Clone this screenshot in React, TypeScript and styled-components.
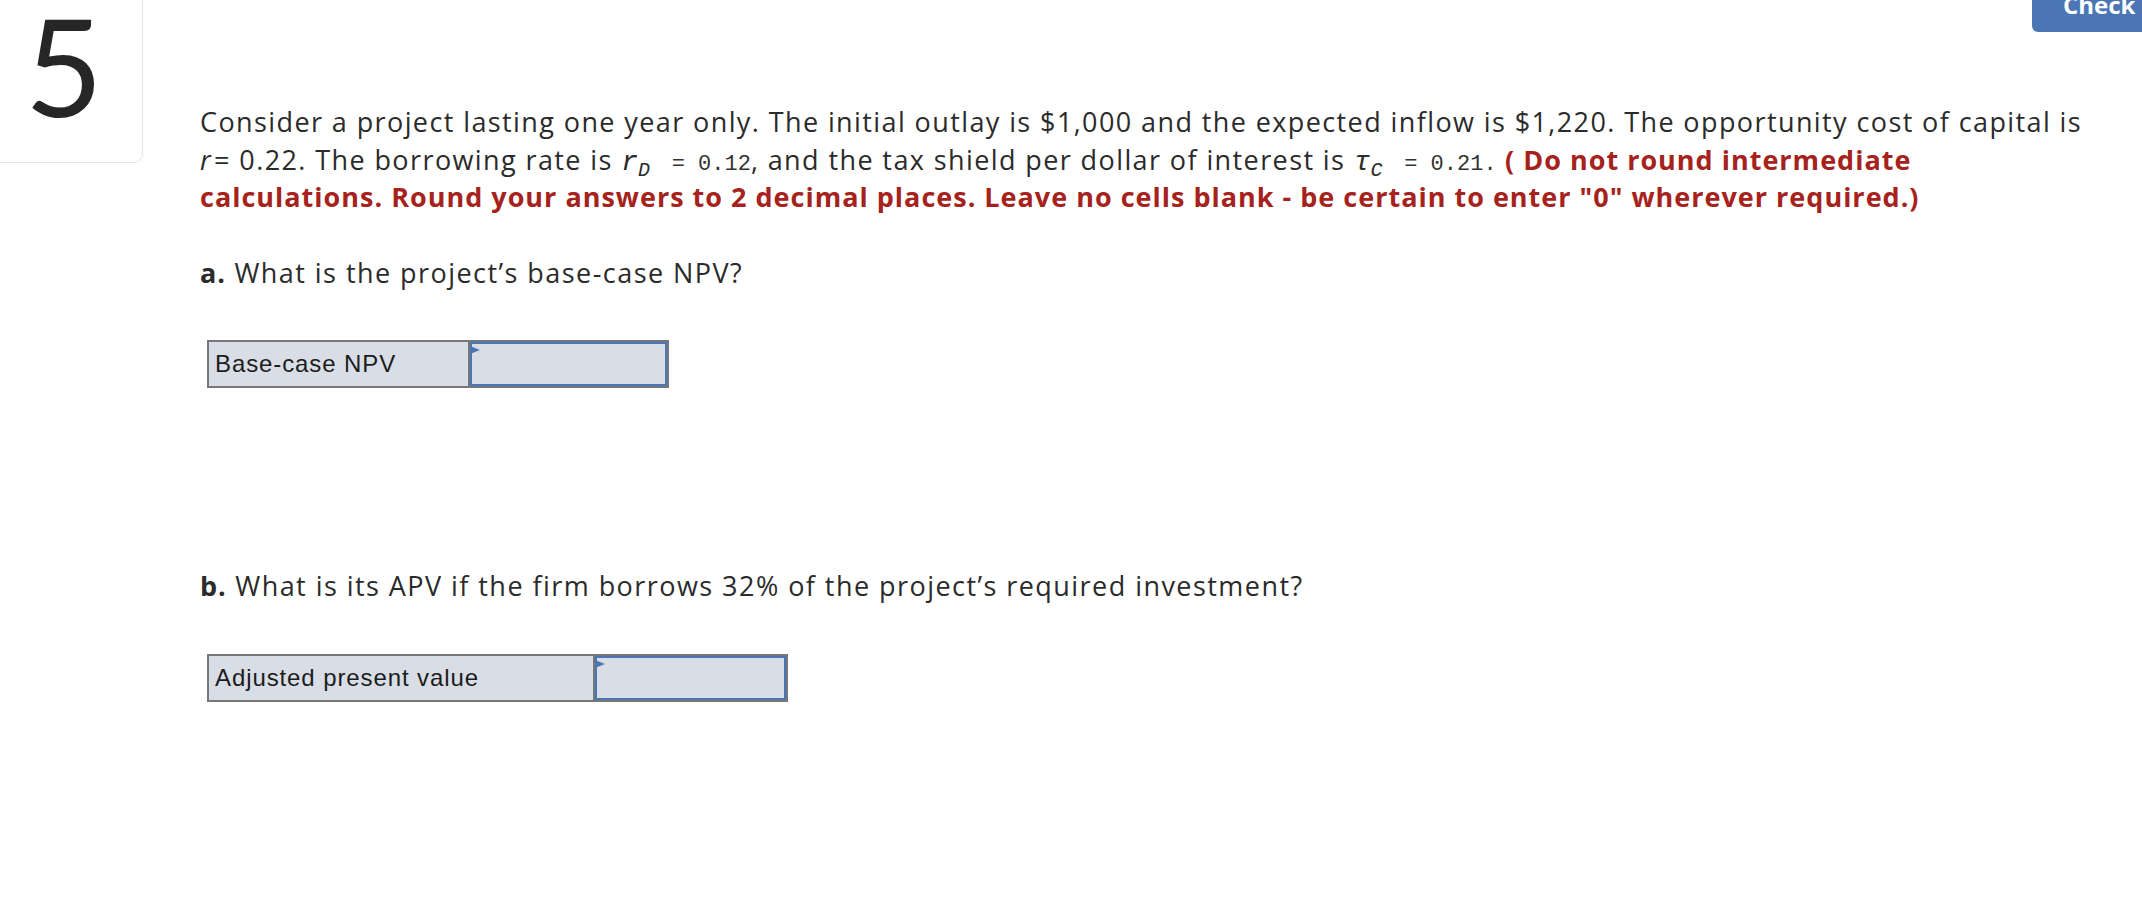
import React from "react";
import styled, { createGlobalStyle } from "styled-components";

const Global = createGlobalStyle`
  html, body {
    margin: 0;
    padding: 0;
    background: #ffffff;
    overflow: hidden;
  }
  body {
    font-family: "Open Sans", "Noto Sans", sans-serif;
    color: #2b2b2b;
  }
`;

const Page = styled.div`
  position: relative;
  display: flex;
  align-items: flex-start;
  width: 2142px;
  height: 910px;
  overflow: hidden;
`;

const NumberCard = styled.div`
  box-sizing: border-box;
  flex: none;
  width: 155px;
  height: 175px;
  margin-top: -12px;
  margin-left: -12px;
  padding-top: 9px;
  padding-right: 3px;
  border: 1px solid #e4e4e4;
  border-radius: 9px;
  background: #ffffff;
  display: flex;
  justify-content: center;
  align-items: flex-start;
`;

const Number = styled.span`
  font-family: "Lato", sans-serif;
  font-weight: 400;
  font-size: 135px;
  line-height: 1;
  color: #262626;
`;

const CheckButton = styled.button`
  position: absolute;
  top: -22px;
  right: -30px;
  width: 140px;
  height: 54px;
  box-sizing: border-box;
  padding: 0 0 0 31px;
  border: none;
  border-radius: 6px;
  background: #4a77b4;
  color: #ffffff;
  font-family: "Open Sans", sans-serif;
  font-weight: 700;
  font-size: 24px;
  text-align: left;
  line-height: 54px;
`;

const Content = styled.main`
  flex: 1;
  margin-left: 57px;
  padding-top: 103px;
`;

const Paragraph = styled.p`
  margin: 0 0 38px 0;
  font-size: 27px;
  line-height: 37.5px;
  letter-spacing: 1.4px;
  white-space: nowrap;
  color: #2b2b2b;
`;

const VarItalic = styled.i`
  font-style: italic;
  margin-right: 2px;
`;

const MathVar = styled.span`
  font-family: "Liberation Mono", monospace;
  font-style: italic;
  font-size: 28px;
  line-height: 1;
  letter-spacing: 0;
`;

const Sub = styled.sub`
  font-family: "Liberation Mono", monospace;
  font-style: italic;
  font-size: 20px;
  vertical-align: -6px;
  line-height: 0;
  letter-spacing: 0;
`;

const Mono = styled.span`
  font-family: "Liberation Mono", monospace;
  font-size: 22px;
  line-height: 1;
  letter-spacing: 0;
  color: #333333;
`;

const Warning = styled.strong`
  color: #a6221c;
  font-weight: 700;
  letter-spacing: 1px;
`;

const Question = styled.h2`
  margin: 0;
  font-size: 27px;
  line-height: 37.5px;
  letter-spacing: 1.45px;
  font-weight: 400;
  color: #2b2b2b;
`;

const Letter = styled.b`
  font-weight: 700;
  letter-spacing: 1px;
`;

const AnswerTable = styled.div<{ $gapAfter: number }>`
  display: flex;
  box-sizing: border-box;
  width: fit-content;
  height: 48px;
  margin: 49px 0 ${(p) => p.$gapAfter}px 7px;
  border: 2px solid #777777;
  background: #d9dde6;
`;

const LabelCell = styled.div<{ $width: number }>`
  box-sizing: border-box;
  width: ${(p) => p.$width}px;
  padding-left: 6px;
  border-right: 2px solid #777777;
  display: flex;
  align-items: center;
  font-family: "Liberation Sans", Arial, sans-serif;
  font-size: 24px;
  letter-spacing: 0.9px;
  color: #1c1c1c;
`;

const InputCell = styled.div<{ $width: number }>`
  position: relative;
  box-sizing: border-box;
  width: ${(p) => p.$width}px;
  border: 2px solid #4a76b6;
  background: #d9dde6;
`;

const Marker = styled.span`
  position: absolute;
  left: -2px;
  top: 2px;
  width: 0;
  height: 0;
  border-top: 4.5px solid transparent;
  border-bottom: 4.5px solid transparent;
  border-left: 10px solid #4a76b6;
`;

function Answer({
  label,
  labelWidth,
  inputWidth,
  gapAfter,
}: {
  label: string;
  labelWidth: number;
  inputWidth: number;
  gapAfter: number;
}) {
  return (
    <AnswerTable $gapAfter={gapAfter}>
      <LabelCell $width={labelWidth}>{label}</LabelCell>
      <InputCell $width={inputWidth}>
        <Marker />
      </InputCell>
    </AnswerTable>
  );
}

export default function App() {
  return (
    <>
      <Global />
      <Page>
        <NumberCard>
          <Number>5</Number>
        </NumberCard>
        <Content>
          <Paragraph>
            Consider a project lasting one year only. The initial outlay is $1,000 and the expected inflow is $1,220. The opportunity cost of capital is
            <br />
            <VarItalic>r</VarItalic>= 0.22. The borrowing rate is <MathVar>r</MathVar>
            <Sub>D</Sub> <Mono>&nbsp;=&nbsp;0.12</Mono>, and the tax shield per dollar of interest is <MathVar>τ</MathVar>
            <Sub>C</Sub> <Mono>&nbsp;=&nbsp;0.21.</Mono> <Warning>( Do not round intermediate</Warning>
            <br />
            <Warning>
              calculations. Round your answers to 2 decimal places. Leave no cells blank - be certain to enter "0" wherever required.)
            </Warning>
          </Paragraph>
          <Question>
            <Letter>a.</Letter> What is the project’s base-case NPV?
          </Question>
          <Answer label="Base-case NPV" labelWidth={261} inputWidth={197} gapAfter={179} />
          <Question>
            <Letter>b.</Letter> What is its APV if the firm borrows 32% of the project’s required investment?
          </Question>
          <Answer label="Adjusted present value" labelWidth={386} inputWidth={191} gapAfter={0} />
        </Content>
        <CheckButton type="button">Check</CheckButton>
      </Page>
    </>
  );
}
